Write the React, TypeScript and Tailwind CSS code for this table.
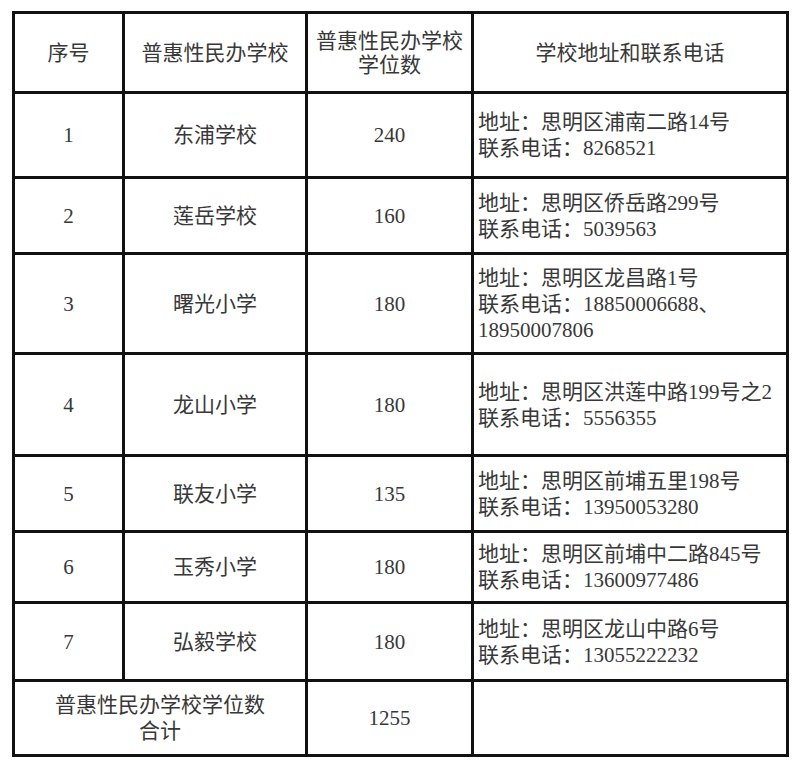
import React from 'react';

type School = {
  no: number;
  name: string;
  seats: number;
  lines: string[];
  h: string;
};

const schools: School[] = [
  { no: 1, name: '东浦学校', seats: 240, lines: ['地址：思明区浦南二路14号', '联系电话：8268521'], h: 'h-[85px]' },
  { no: 2, name: '莲岳学校', seats: 160, lines: ['地址：思明区侨岳路299号', '联系电话：5039563'], h: 'h-[76px]' },
  {
    no: 3,
    name: '曙光小学',
    seats: 180,
    lines: ['地址：思明区龙昌路1号', '联系电话：18850006688、', '18950007806'],
    h: 'h-[100px]',
  },
  { no: 4, name: '龙山小学', seats: 180, lines: ['地址：思明区洪莲中路199号之2', '联系电话：5556355'], h: 'h-[102px]' },
  { no: 5, name: '联友小学', seats: 135, lines: ['地址：思明区前埔五里198号', '联系电话：13950053280'], h: 'h-[76px]' },
  { no: 6, name: '玉秀小学', seats: 180, lines: ['地址：思明区前埔中二路845号', '联系电话：13600977486'], h: 'h-[71px]' },
  { no: 7, name: '弘毅学校', seats: 180, lines: ['地址：思明区龙山中路6号', '联系电话：13055222232'], h: 'h-[78px]' },
];

const cell = 'border-[3px] border-[#111] text-center align-middle';

export default function App() {
  return (
    <div
      className="min-h-[767px] w-[800px] bg-white pt-[11px] pl-[12px] text-[21px] leading-[26px] text-[#383838]"
      style={{ fontFamily: '"Liberation Serif", "Noto Sans CJK SC", serif' }}
    >
      <table className="table-fixed border-collapse border-2 border-[#111] w-[774px]">
        <colgroup>
          <col className="w-[110px]" />
          <col className="w-[183px]" />
          <col className="w-[166px]" />
          <col className="w-[315px]" />
        </colgroup>
        <thead>
          <tr className="h-[80px]">
            <th className={`${cell} font-normal`}>序号</th>
            <th className={`${cell} font-normal`}>普惠性民办学校</th>
            <th className={`${cell} font-normal leading-[24px]`}>
              普惠性民办学校
              <br />
              学位数
            </th>
            <th className={`${cell} font-normal`}>学校地址和联系电话</th>
          </tr>
        </thead>
        <tbody>
          {schools.map((s) => (
            <tr key={s.no} className={s.h}>
              <td className={cell}>{s.no}</td>
              <td className={cell}>{s.name}</td>
              <td className={cell}>{s.seats}</td>
              <td className="border-[3px] border-[#111] pl-[4px] align-middle whitespace-nowrap">
                {s.lines.map((l, i) => (
                  <div key={i} className="h-[26px]">
                    {l}
                  </div>
                ))}
              </td>
            </tr>
          ))}
          <tr className="h-[75px]">
            <td colSpan={2} className={cell}>
              普惠性民办学校学位数
              <br />
              合计
            </td>
            <td className={cell}>1255</td>
            <td className="border-[3px] border-[#111]"></td>
          </tr>
        </tbody>
      </table>
    </div>
  );
}
